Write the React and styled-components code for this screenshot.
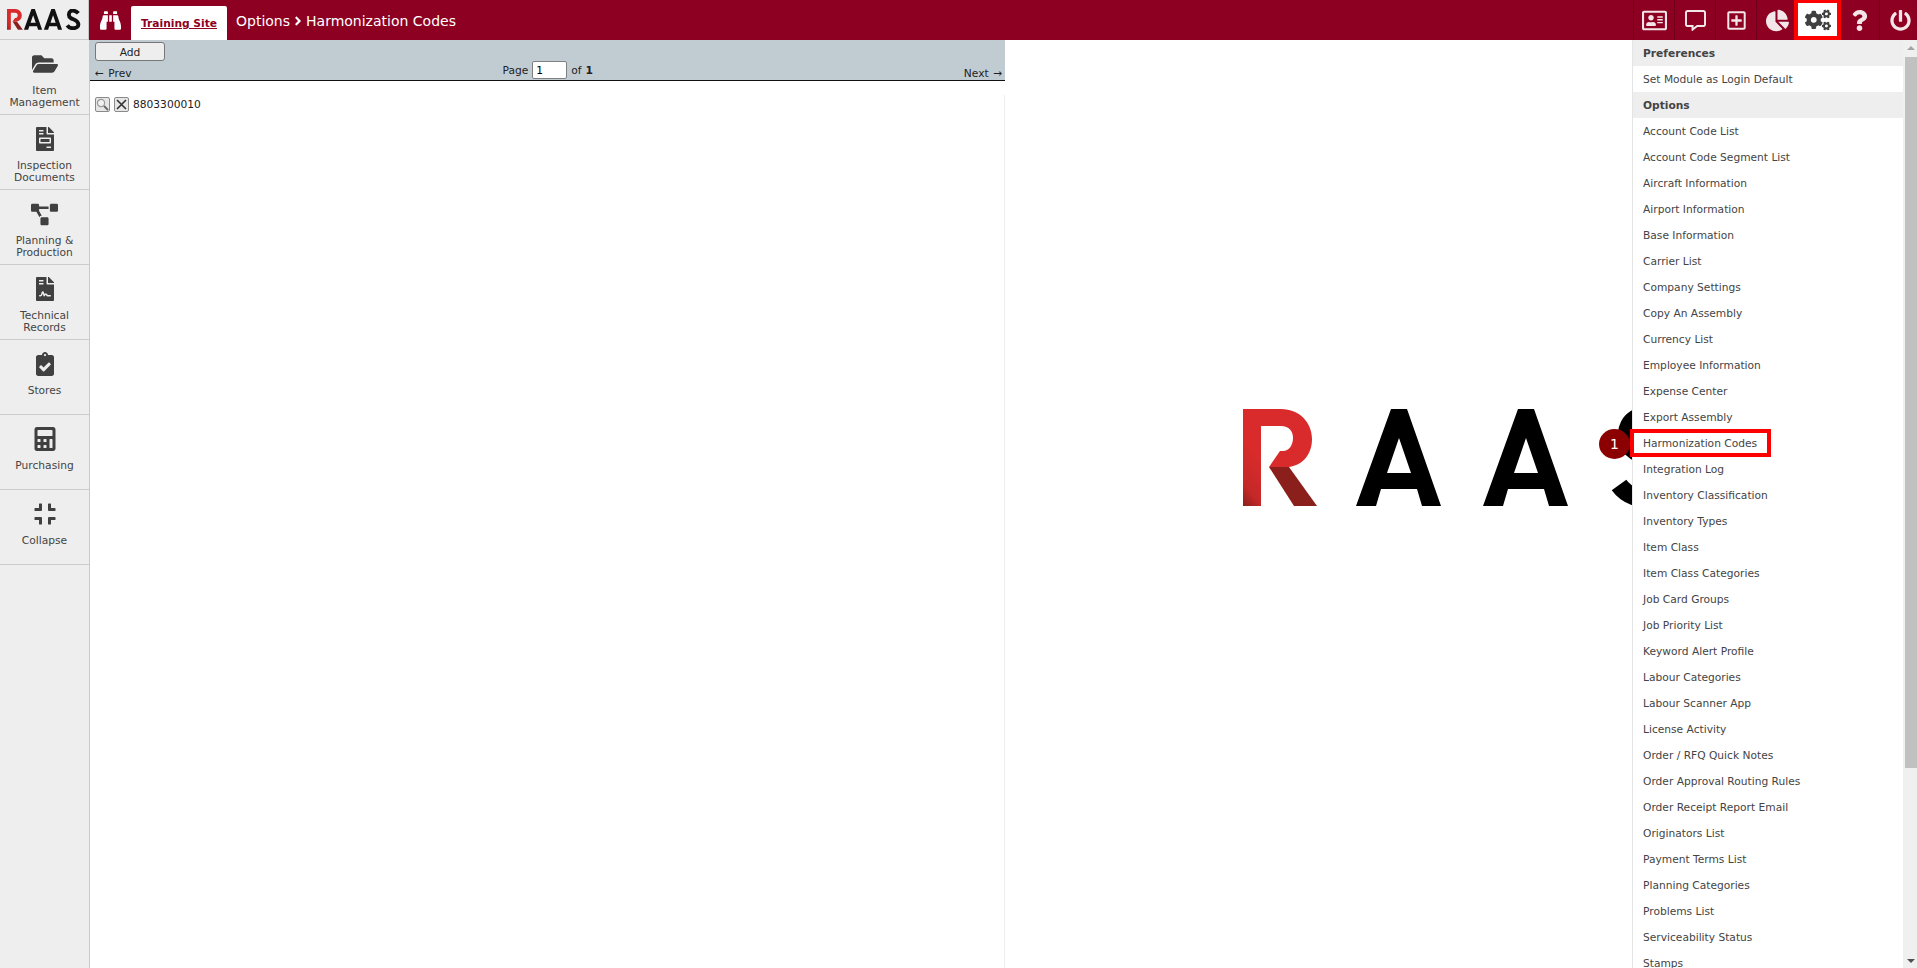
import React from "react"
import styled, { createGlobalStyle } from "styled-components"
import {
  FaAngleRight,
  FaBinoculars,
  FaCalculator,
  FaChartPie,
  FaClipboardCheck,
  FaCogs,
  FaCompress,
  FaFileContract,
  FaFileInvoice,
  FaFolderOpen,
  FaPowerOff,
  FaProjectDiagram,
  FaQuestion,
  FaRegAddressCard,
  FaRegCommentAlt,
  FaRegPlusSquare,
} from "react-icons/fa"

const FONT = `"DejaVu Sans", Verdana, sans-serif`

const GlobalStyle = createGlobalStyle`
  html, body, #root { height: 100%; margin: 0; overflow: hidden; }
  body { font-family: ${FONT}; font-size: 10.67px; background: #fff; color: #222; }
`

const Page = styled.div`
  display: flex;
  flex-direction: column;
  width: 100%;
  height: 968px;
  position: relative;
  overflow: hidden;
`

const Header = styled.header`
  display: flex;
  align-items: stretch;
  height: 40px;
  flex: none;
  background: #8e0022;
`

const LogoCell = styled.div`
  width: 89px;
  flex: none;
  display: flex;
  align-items: center;
  padding: 0 0 0 7px;
  box-sizing: border-box;
  background: #eeeeee;
  border-right: 1px solid #c8c8c8;
  border-bottom: 1px solid #cccccc;
`

const FinderCell = styled.div`
  width: 41px;
  margin-left: 1px;
  flex: none;
  display: flex;
  align-items: center;
  justify-content: center;
  color: #fff;
  font-size: 21px;
`

const SiteTab = styled.a`
  width: 96px;
  margin-top: 6px;
  flex: none;
  display: flex;
  align-items: center;
  justify-content: center;
  background: #fff;
  border-radius: 2px 2px 0 0;
  color: #8e0022;
  font-size: 10.67px;
  font-weight: bold;
  text-decoration: underline;
`

const Crumbs = styled.div`
  display: flex;
  align-items: center;
  gap: 1px;
  margin-left: 9px;
  padding-top: 1px;
  color: #fff;
  font-size: 14px;
`

const HeaderTools = styled.nav`
  margin-left: auto;
  margin-right: -3px;
  display: grid;
  grid-template-columns: repeat(7, 41px);
`

const ToolButton = styled.button`
  display: flex;
  align-items: center;
  justify-content: center;
  padding: 0;
  font-size: ${p => p.$size || 24}px;
  color: ${p => (p.$active ? "#404040" : "#f3e6e9")};
  background: ${p => (p.$active ? "#fff" : "transparent")};
  border: none;
  border-left: 1px solid #6e001a;
  ${p =>
    p.$active &&
    `
    position: relative;
    z-index: 1;
    border-left: none;
    box-shadow: inset 1px 0 #f00, inset -1px 0 #f00, inset 0 3px #f00, inset 0 -4px #f00, -3px 0 #f00, 3px 0 #f00;
  `}
`

const Body = styled.div`
  flex: 1;
  display: flex;
  min-height: 0;
`

const Sidebar = styled.aside`
  width: 89px;
  flex: none;
  background: #eeeeee;
  border-right: 1px solid #c8c8c8;
`

const SideItem = styled.a`
  height: 75px;
  box-sizing: border-box;
  display: flex;
  flex-direction: column;
  align-items: center;
  border-bottom: 1px solid #cccccc;
  color: #444;
  text-align: center;
  line-height: 12px;
`

const SideIcon = styled.span`
  height: 32px;
  margin: 8px 0 5px;
  display: flex;
  align-items: center;
  justify-content: center;
  font-size: ${p => p.$size || 26}px;
  color: #404040;
`

const LeftPane = styled.section`
  width: 915px;
  flex: none;
  display: flex;
  flex-direction: column;
`

const Toolbar = styled.div`
  height: 40px;
  flex: none;
  display: flex;
  flex-direction: column;
  background: #c1ccd2;
  border-bottom: 1px solid #111;
`

const AddButton = styled.button`
  width: 70px;
  height: 19px;
  margin: 2px 0 0 5px;
  padding: 1px 0 0;
  background: #eeeeee;
  border: 1px solid #777;
  border-radius: 3px;
  font: inherit;
  color: #222;
`

const Pager = styled.div`
  display: flex;
  align-items: flex-end;
  justify-content: space-between;
  margin-top: auto;
  padding: 0 3px 0 5px;
  height: 19px;
  word-spacing: 1px;
`

const PageBox = styled.div`
  display: flex;
  align-items: center;
  gap: 4px;
`

const PageInput = styled.input`
  width: 35px;
  height: 18px;
  margin-bottom: 1px;
  box-sizing: border-box;
  padding: 0 3px;
  border: 1px solid #808080;
  border-radius: 2px;
  background: #fff;
  font: inherit;
`

const ListArea = styled.div`
  flex: 1;
  margin-top: 14px;
  padding-left: 5px;
  border-right: 1px solid #eeeeee;
`

const ListRow = styled.div`
  display: flex;
  align-items: center;
  gap: 4px;
  height: 17px;
  margin-top: 1px;
`

const RowIcon = styled.span`
  width: 15px;
  height: 15px;
  box-sizing: border-box;
  display: flex;
  align-items: center;
  justify-content: center;
  background: #e6e6e6;
  border: 1px solid #8a8a8a;
  border-radius: 2px;
`

const LogoPane = styled.main`
  flex: 1;
  display: flex;
  justify-content: center;
  padding-top: 369px;
`

const Menu = styled.div`
  position: absolute;
  top: 40px;
  right: 0;
  bottom: 0;
  width: 284px;
  display: flex;
  background: #fff;
  border-left: 1px solid #e4e4e4;
`

const MenuList = styled.ul`
  flex: 1;
  margin: 0;
  padding: 0;
  list-style: none;
  overflow: hidden;
`

const MenuRow = styled.li`
  height: 26px;
  padding-left: 10px;
  display: flex;
  align-items: center;
  background: ${p => (p.$head ? "#eeeeee" : "#fff")};
  font-weight: ${p => (p.$head ? "bold" : "normal")};
  color: #444;
`

const Scrollbar = styled.div`
  width: 14px;
  flex: none;
  display: flex;
  flex-direction: column;
  align-items: flex-end;
  background: #f0f0f0;
`

const ScrollArrow = styled.span`
  width: 12px;
  height: ${p => p.$h}px;
  flex: none;
  display: flex;
  align-items: ${p => (p.$down ? "flex-end" : "flex-start")};
  justify-content: center;
  padding: ${p => (p.$down ? "0 0 5px" : "6px 0 0")};
  box-sizing: border-box;
  &::before {
    content: "";
    border-left: 4px solid transparent;
    border-right: 4px solid transparent;
    ${p => (p.$down ? "border-top" : "border-bottom")}: 4px solid ${p => (p.$down ? "#505050" : "#a3a3a3")};
  }
`

const ScrollThumb = styled.span`
  width: 12px;
  height: 711px;
  flex: none;
  background: #c1c1c1;
`

const Callout = styled.div`
  position: absolute;
  top: 429px;
  left: 1630px;
  width: 141px;
  height: 28px;
  box-sizing: border-box;
  border: 4px solid #ff0000;
`

const Badge = styled.span`
  position: absolute;
  top: 429px;
  left: 1599px;
  width: 31px;
  height: 30px;
  border-radius: 50%;
  display: flex;
  align-items: center;
  justify-content: center;
  background: #8b0000;
  color: #fff;
  font-size: 14px;
`

// letter offsets differ: the header mark is set much tighter than the splash one
const RaasLogo = ({ width, height, ink, boxWidth, offsets }) => (
  <svg width={width} height={height} viewBox={`0 0 ${boxWidth} 98`} aria-label="RAAS">
    <defs>
      <linearGradient id={`rg-${width}`} x1="0.75" y1="0.1" x2="0" y2="1">
        <stop offset="0.55" stopColor="#d92b2b" />
        <stop offset="0.85" stopColor="#c42828" />
        <stop offset="1" stopColor="#8a1f1c" />
      </linearGradient>
    </defs>
    <path
      fill={`url(#rg-${width})`}
      d="M0 0H38C57 0 69 14 69 30C69 45 60 56 46 58H26L37 42H40C46 42 50 36 50 29C50 22 46 17 38 17H18V97H0Z"
    />
    <path fill="#8a1f1c" d="M26 58L46 58L74 97H51Z" />
    {offsets.slice(0, 2).map(x => (
      <path
        key={x}
        transform={`translate(${x} 0)`}
        fill={ink}
        fillRule="evenodd"
        d="M35 0H51L85 97H66L61 80H25L20 97H0ZM43 29L31 64H55Z"
      />
    ))}
    <path
      transform={`translate(${offsets[2]} 0)`}
      fill="none"
      stroke={ink}
      strokeWidth="18"
      d="M61 20C51 8 33 4 25 10C15 16 13 34 25 42C38 50 59 50 61 70C63 92 25 98 9 76"
    />
  </svg>
)

const SearchGlyph = () => (
  <svg width="13" height="13" viewBox="0 0 13 13">
    <circle cx="5" cy="5" r="3.6" fill="#f2f2f2" stroke="#9a9a9a" strokeWidth="1.2" />
    <path d="M8 8L12 12" stroke="#666" strokeWidth="1.8" />
  </svg>
)

const CrossGlyph = () => (
  <svg width="13" height="13" viewBox="0 0 13 13">
    <path d="M2 2L11 11M11 2L2 11" stroke="#333" strokeWidth="1.6" />
  </svg>
)

const sideItems = [
  { icon: <FaFolderOpen />, label: ["Item", "Management"] },
  { icon: <FaFileInvoice />, label: ["Inspection", "Documents"], size: 24 },
  { icon: <FaProjectDiagram />, label: ["Planning &", "Production"], size: 27 },
  { icon: <FaFileContract />, label: ["Technical", "Records"], size: 24 },
  { icon: <FaClipboardCheck />, label: ["Stores"], size: 24 },
  { icon: <FaCalculator />, label: ["Purchasing"], size: 24 },
  { icon: <FaCompress />, label: ["Collapse"], size: 24 },
]

const tools = [
  { icon: <FaRegAddressCard />, size: 25 },
  { icon: <FaRegCommentAlt />, size: 21 },
  { icon: <FaRegPlusSquare />, size: 21 },
  { icon: <FaChartPie />, size: 23 },
  { icon: <FaCogs />, size: 26, active: true },
  { icon: <FaQuestion />, size: 21 },
  { icon: <FaPowerOff />, size: 21 },
]

const options = [
  "Account Code List",
  "Account Code Segment List",
  "Aircraft Information",
  "Airport Information",
  "Base Information",
  "Carrier List",
  "Company Settings",
  "Copy An Assembly",
  "Currency List",
  "Employee Information",
  "Expense Center",
  "Export Assembly",
  "Harmonization Codes",
  "Integration Log",
  "Inventory Classification",
  "Inventory Types",
  "Item Class",
  "Item Class Categories",
  "Job Card Groups",
  "Job Priority List",
  "Keyword Alert Profile",
  "Labour Categories",
  "Labour Scanner App",
  "License Activity",
  "Order / RFQ Quick Notes",
  "Order Approval Routing Rules",
  "Order Receipt Report Email",
  "Originators List",
  "Payment Terms List",
  "Planning Categories",
  "Problems List",
  "Serviceability Status",
  "Stamps",
]

const App = () => (
  <Page>
    <GlobalStyle />
    <Header>
      <LogoCell>
        <RaasLogo width={75} height={21} ink="#111" boxWidth={350} offsets={[79, 172, 272]} />
      </LogoCell>
      <FinderCell>
        <FaBinoculars />
      </FinderCell>
      <SiteTab>Training Site</SiteTab>
      <Crumbs>
        Options <FaAngleRight /> Harmonization Codes
      </Crumbs>
      <HeaderTools>
        {tools.map((t, i) => (
          <ToolButton key={i} $size={t.size} $active={t.active}>
            {t.icon}
          </ToolButton>
        ))}
      </HeaderTools>
    </Header>
    <Body>
      <Sidebar>
        {sideItems.map(el => (
          <SideItem key={el.label[0]}>
            <SideIcon $size={el.size}>{el.icon}</SideIcon>
            {el.label.map(line => (
              <span key={line}>{line}</span>
            ))}
          </SideItem>
        ))}
      </Sidebar>
      <LeftPane>
        <Toolbar>
          <AddButton>Add</AddButton>
          <Pager>
            <span>← Prev</span>
            <PageBox>
              Page <PageInput defaultValue="1" /> of <b>1</b>
            </PageBox>
            <span>Next →</span>
          </Pager>
        </Toolbar>
        <ListArea>
          <ListRow>
            <RowIcon>
              <SearchGlyph />
            </RowIcon>
            <RowIcon>
              <CrossGlyph />
            </RowIcon>
            8803300010
          </ListRow>
        </ListArea>
      </LeftPane>
      <LogoPane>
        <RaasLogo width={437} height={98} ink="#000" boxWidth={437} offsets={[113, 240, 367]} />
      </LogoPane>
    </Body>
    <Menu>
      <MenuList>
        <MenuRow $head>Preferences</MenuRow>
        <MenuRow>Set Module as Login Default</MenuRow>
        <MenuRow $head>Options</MenuRow>
        {options.map(o => (
          <MenuRow key={o}>{o}</MenuRow>
        ))}
      </MenuList>
      <Scrollbar>
        <ScrollArrow $h={17} />
        <ScrollThumb />
        <ScrollArrow $h={200} $down />
      </Scrollbar>
    </Menu>
    <Badge>1</Badge>
    <Callout />
  </Page>
)

export default App
